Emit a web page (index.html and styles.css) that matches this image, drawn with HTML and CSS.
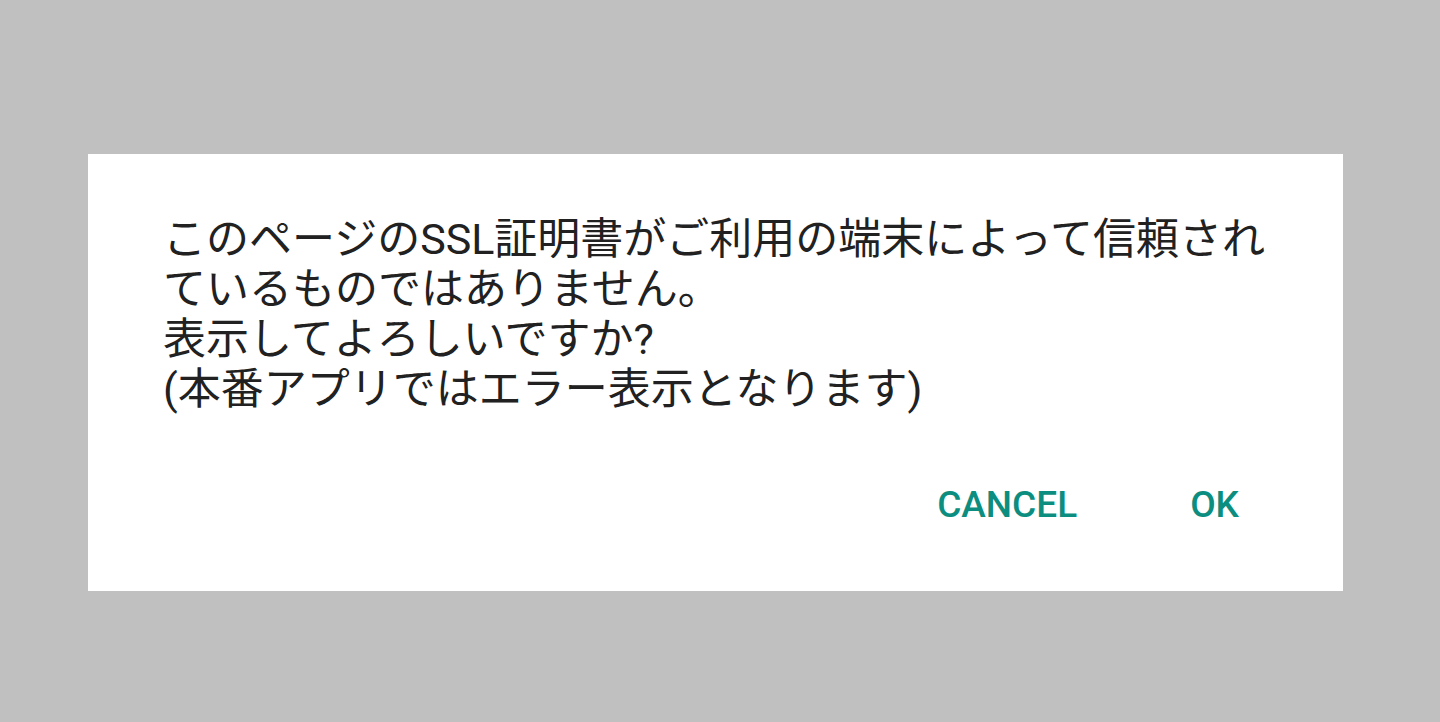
FILE: index.html
```html
<!DOCTYPE html>
<html lang="ja">
<head>
<meta charset="utf-8">
<link rel="stylesheet" href="styles.css">
</head>
<body>
<div class="screen">
  <div class="dialog">
    <div class="message">このページのSSL証明書がご利用の端末によって信頼されているものではありません。<br>表示してよろしいですか?<br>(本番アプリではエラー表示となります)</div>
    <div class="actions">
      <span class="btn">CANCEL</span>
      <span class="btn">OK</span>
    </div>
  </div>
</div>
</body>
</html>
```
FILE: styles.css
```css
html, body {
  margin: 0;
  padding: 0;
  background: #c0c0c0;
}
.screen {
  width: 1440px;
  height: 722px;
  padding-top: 154px;
  padding-left: 88px;
  box-sizing: border-box;
}
.dialog {
  width: 1255px;
  height: 437px;
  background: #ffffff;
  box-sizing: border-box;
  padding: 60px 64px 0 75px;
}
.message {
  font-family: "Roboto", "Noto Sans CJK JP", sans-serif;
  font-size: 43px;
  line-height: 50px;
  color: #212121;
}
.actions {
  display: flex;
  justify-content: flex-end;
  gap: 113px;
  margin-top: 70px;
  padding-right: 40px;
}
.btn {
  font-family: "Roboto", sans-serif;
  font-weight: 500;
  font-size: 37px;
  line-height: 42px;
  color: #0b8e80;
}
```
